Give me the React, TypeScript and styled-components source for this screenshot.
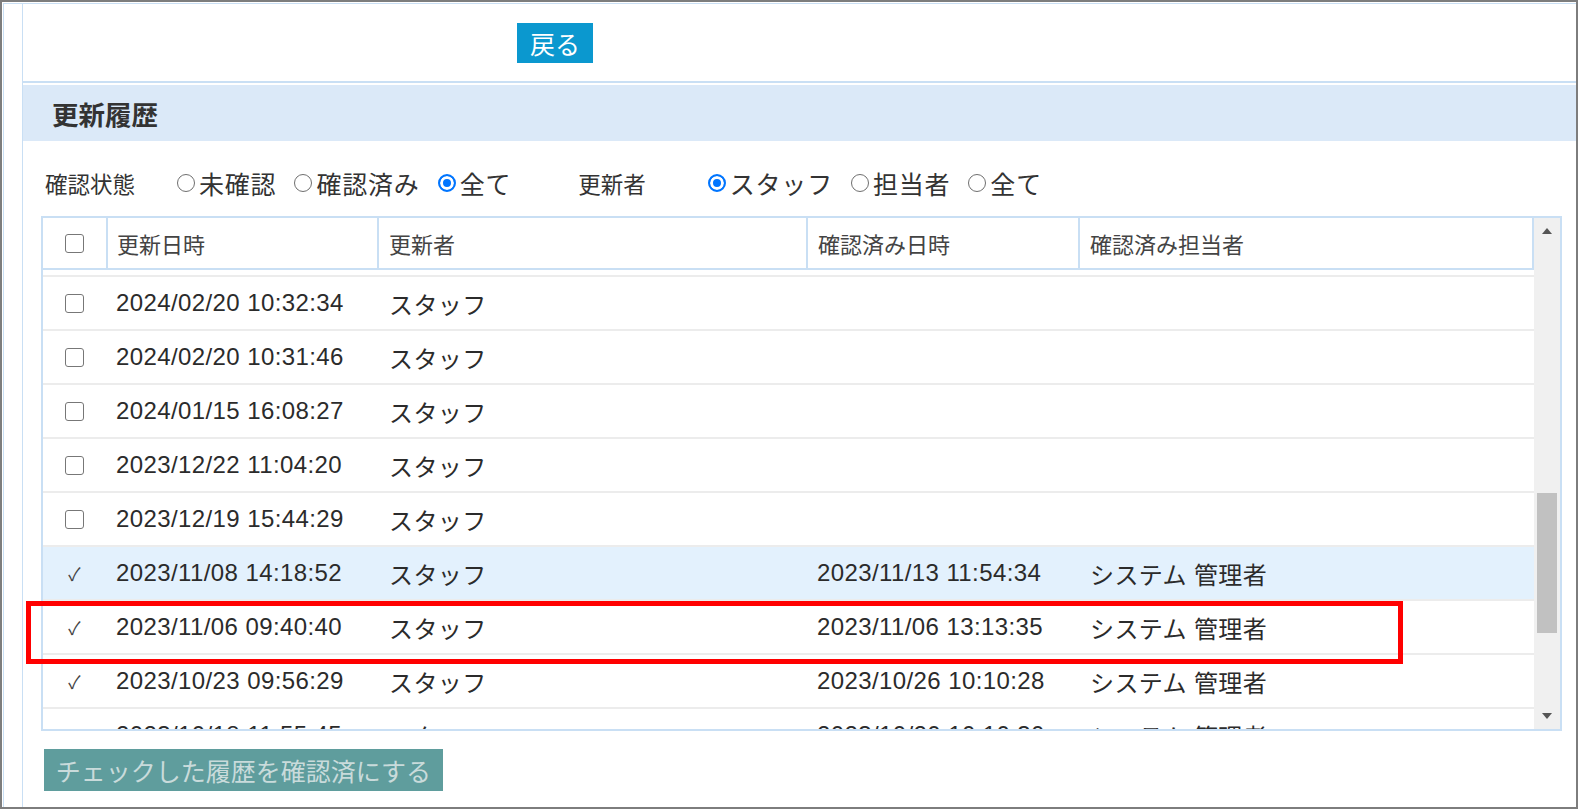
import React, { useLayoutEffect, useRef } from "react";
import styled, { createGlobalStyle } from "styled-components";

const GlobalStyle = createGlobalStyle`
  html, body {
    margin: 0;
    padding: 0;
    height: 100%;
    overflow: hidden;
    background: #fff;
  }
  body {
    font-family: "Liberation Sans", "Noto Sans CJK JP", sans-serif;
    color: #333;
  }
  #root { height: 100%; }
`;

const LINE = "#c9dff4";

const Frame = styled.div`
  box-sizing: border-box;
  height: 100vh;
  border: 2px solid #7d7d7d;
  padding: 1px 0 0 1px;
  background: #fff;
  display: flex;
`;

const Inner = styled.div`
  flex: 1;
  display: flex;
  border-top: 1px solid ${LINE};
  border-left: 1px solid ${LINE};
  padding-left: 18px;
`;

const Panel = styled.div`
  flex: 1;
  min-width: 0;
  display: flex;
  flex-direction: column;
  border-left: 1px solid ${LINE};
`;

const TopBar = styled.div`
  height: 77px;
  display: flex;
  align-items: center;
  padding-left: 494px;
  border-bottom: 2px solid ${LINE};
`;

const BackButton = styled.button`
  height: 40px;
  padding: 0 13px;
  border: 0;
  background: #0b98cf;
  color: #fff;
  font-family: inherit;
  font-size: 25px;
  cursor: pointer;
`;

const SectionHeader = styled.h2`
  margin: 2px 0 0;
  height: 56px;
  display: flex;
  align-items: center;
  padding-left: 29px;
  background: #dbe9f8;
  font-size: 26.5px;
  font-weight: bold;
  color: #333;
`;

const Filters = styled.div`
  box-sizing: border-box;
  height: 75px;
  padding: 9px 0 0 22px;
  display: flex;
  align-items: center;
`;

const FilterLabel = styled.span<{ $gap: number; $lead?: number }>`
  font-size: 22.5px;
  color: #333;
  margin-left: ${p => p.$lead || 0}px;
  margin-right: ${p => p.$gap}px;
`;

const Option = styled.label`
  display: flex;
  align-items: center;
  margin-right: 18px;
  font-size: 25px;
  letter-spacing: 0.8px;
  color: #333;
  cursor: pointer;
`;

const Radio = styled.input.attrs({ type: "radio" })`
  appearance: none;
  flex-shrink: 0;
  box-sizing: border-box;
  width: 18px;
  height: 18px;
  margin: 0 4px 0 0;
  border: 1.7px solid #6f6f6f;
  border-radius: 50%;
  background: #fff;
  &:checked {
    border: 2px solid #0075ff;
    background: #0075ff;
    box-shadow: inset 0 0 0 3px #fff;
  }
`;

const Check = styled.input.attrs({ type: "checkbox" })`
  appearance: none;
  flex-shrink: 0;
  box-sizing: border-box;
  width: 19px;
  height: 19px;
  margin: 0;
  border: 1.7px solid #777;
  border-radius: 3px;
  background: #fff;
`;

const TableBox = styled.div`
  position: relative;
  box-sizing: border-box;
  height: 515px;
  margin: 0 14px 0 18px;
  border: 2px solid ${LINE};
  display: flex;
`;

const TableArea = styled.div`
  flex: 1;
  min-width: 0;
  display: flex;
  flex-direction: column;
`;

const COLUMNS = "65px 271px 429px 272px 1fr";

const HeaderRow = styled.div`
  display: grid;
  grid-template-columns: ${COLUMNS};
  height: 50px;
  border-bottom: 2px solid ${LINE};
`;

const HeaderCell = styled.div<{ $center?: boolean; $pad?: number }>`
  display: flex;
  align-items: center;
  justify-content: ${p => (p.$center ? "center" : "flex-start")};
  padding-left: ${p => (p.$center ? 0 : p.$pad ?? 10)}px;
  border-right: 2px solid ${LINE};
  font-size: 22px;
  color: #444;
`;

const Body = styled.div`
  flex: 1;
  overflow: hidden;
`;

const Row = styled.div<{ $active?: boolean }>`
  display: grid;
  grid-template-columns: ${COLUMNS};
  height: 52px;
  border-bottom: 2px solid #ececec;
  background: ${p => (p.$active ? "#e3f1fd" : "#fff")};
`;

const Cell = styled.div<{ $center?: boolean; $pad?: number }>`
  display: flex;
  align-items: center;
  justify-content: ${p => (p.$center ? "center" : "flex-start")};
  padding-left: ${p => (p.$center ? 0 : p.$pad ?? 10)}px;
  padding-right: ${p => (p.$center ? 2 : 0)}px;
  font-size: 24px;
  letter-spacing: 0.4px;
  color: #2b2b2b;
  white-space: nowrap;
`;

const Tick = styled.span`
  font-size: 18px;
  color: #444;
`;

const ScrollBar = styled.div`
  width: 26px;
  background: #f0f0f0;
  display: flex;
  flex-direction: column;
`;

const ArrowBox = styled.div`
  height: 26px;
  display: flex;
  align-items: center;
  justify-content: center;
`;

const Track = styled.div`
  flex: 1;
`;

const Thumb = styled.div<{ $top: number; $size: number }>`
  margin: ${p => p.$top}px 3px 0;
  height: ${p => p.$size}px;
  background: #c1c1c1;
`;

const Marker = styled.div`
  position: absolute;
  left: -17px;
  top: 383px;
  width: 1377px;
  height: 63px;
  box-sizing: border-box;
  border: 5px solid #ff0000;
  pointer-events: none;
`;

const ConfirmButton = styled.button`
  align-self: flex-start;
  margin: 18px 0 0 21px;
  width: 399px;
  height: 42px;
  padding: 0;
  border: 0;
  background: #5f9d9d;
  color: #c9dbdb;
  font-family: inherit;
  font-size: 25px;
`;

type HistoryRow = {
  updated: string;
  by: string;
  confirmed?: string;
  confirmedBy?: string;
  active?: boolean;
};

const rows: HistoryRow[] = [
  { updated: "2024/02/21 09:12:05", by: "スタッフ" },
  { updated: "2024/02/20 10:32:34", by: "スタッフ" },
  { updated: "2024/02/20 10:31:46", by: "スタッフ" },
  { updated: "2024/01/15 16:08:27", by: "スタッフ" },
  { updated: "2023/12/22 11:04:20", by: "スタッフ" },
  { updated: "2023/12/19 15:44:29", by: "スタッフ" },
  { updated: "2023/11/08 14:18:52", by: "スタッフ", confirmed: "2023/11/13 11:54:34", confirmedBy: "システム 管理者", active: true },
  { updated: "2023/11/06 09:40:40", by: "スタッフ", confirmed: "2023/11/06 13:13:35", confirmedBy: "システム 管理者" },
  { updated: "2023/10/23 09:56:29", by: "スタッフ", confirmed: "2023/10/26 10:10:28", confirmedBy: "システム 管理者" },
  { updated: "2023/10/18 11:55:45", by: "スタッフ", confirmed: "2023/10/20 10:10:30", confirmedBy: "システム 管理者" },
];

const Arrow = ({ down }: { down?: boolean }) => (
  <svg width="10" height="6" viewBox="0 0 10 6">
    <polygon points={down ? "0,0 10,0 5,6" : "0,6 10,6 5,0"} fill="#555" />
  </svg>
);

const App = () => {
  const bodyRef = useRef<HTMLDivElement>(null);

  // the list is scrolled part way down, as in the screenshot
  useLayoutEffect(() => {
    if (bodyRef.current) bodyRef.current.scrollTop = 47;
  }, []);

  return (
    <>
      <GlobalStyle />
      <Frame>
        <Inner>
          <Panel>
            <TopBar>
              <BackButton>戻る</BackButton>
            </TopBar>
            <SectionHeader>更新履歴</SectionHeader>
            <Filters>
              <FilterLabel $gap={42}>確認状態</FilterLabel>
              <Option><Radio name="state" />未確認</Option>
              <Option><Radio name="state" />確認済み</Option>
              <Option><Radio name="state" defaultChecked />全て</Option>
              <FilterLabel $gap={62} $lead={49}>更新者</FilterLabel>
              <Option><Radio name="who" defaultChecked />スタッフ</Option>
              <Option><Radio name="who" />担当者</Option>
              <Option><Radio name="who" />全て</Option>
            </Filters>
            <TableBox>
              <TableArea>
                <HeaderRow>
                  <HeaderCell $center><Check /></HeaderCell>
                  <HeaderCell $pad={9}>更新日時</HeaderCell>
                  <HeaderCell>更新者</HeaderCell>
                  <HeaderCell>確認済み日時</HeaderCell>
                  <HeaderCell>確認済み担当者</HeaderCell>
                </HeaderRow>
                <Body ref={bodyRef}>
                  {rows.map(r => (
                    <Row key={r.updated} $active={r.active}>
                      <Cell $center>{r.confirmed ? <Tick>✓</Tick> : <Check />}</Cell>
                      <Cell $pad={8}>{r.updated}</Cell>
                      <Cell>{r.by}</Cell>
                      <Cell $pad={9}>{r.confirmed}</Cell>
                      <Cell>{r.confirmedBy}</Cell>
                    </Row>
                  ))}
                </Body>
              </TableArea>
              <ScrollBar>
                <ArrowBox><Arrow /></ArrowBox>
                <Track><Thumb $top={249} $size={140} /></Track>
                <ArrowBox><Arrow down /></ArrowBox>
              </ScrollBar>
              <Marker />
            </TableBox>
            <ConfirmButton>チェックした履歴を確認済にする</ConfirmButton>
          </Panel>
        </Inner>
      </Frame>
    </>
  );
};

export default App;
